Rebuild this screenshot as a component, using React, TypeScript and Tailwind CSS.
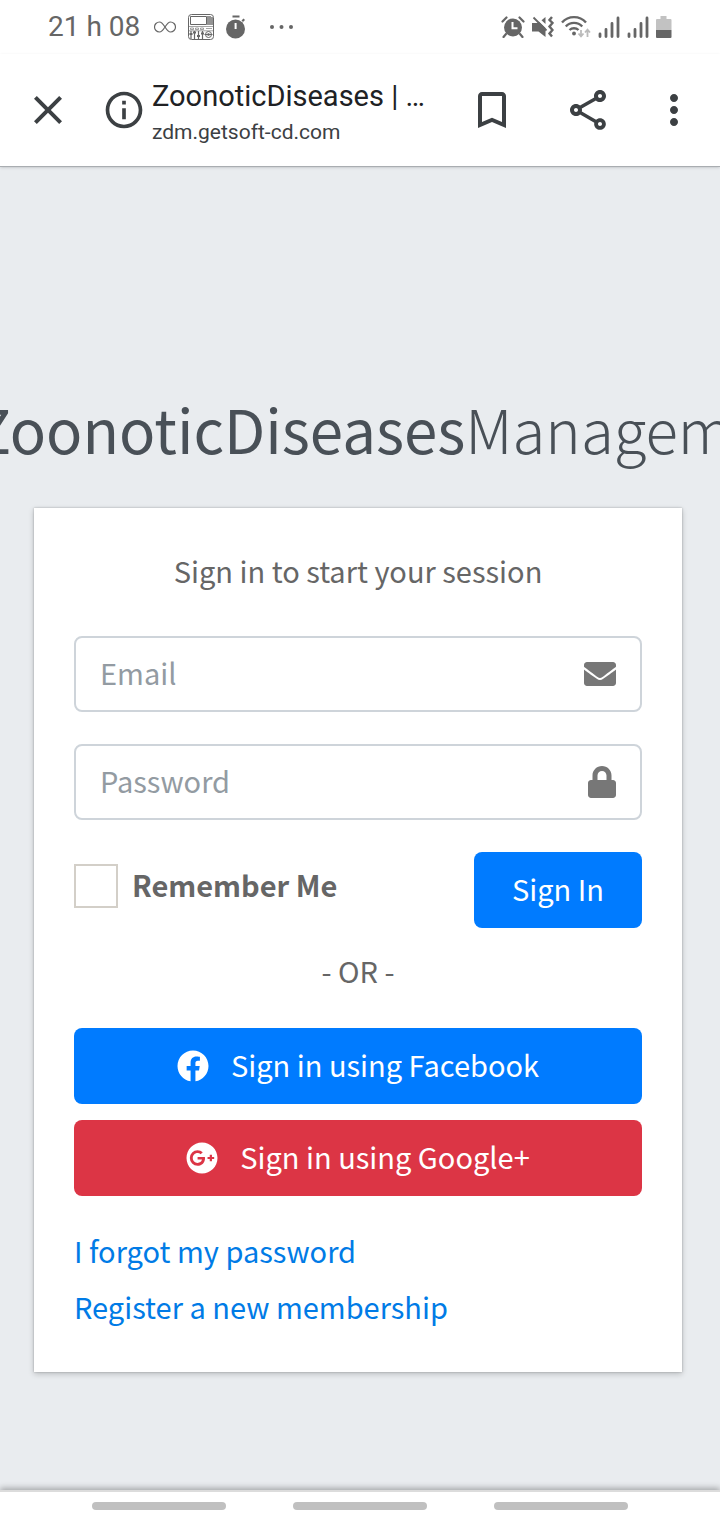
import { FaEnvelope, FaFacebook, FaGooglePlus, FaLock } from "react-icons/fa"
import { MdBookmarkBorder, MdClose, MdInfoOutline, MdMoreVert, MdOutlineShare } from "react-icons/md"

function InfinityIcon() {
  return (
    <svg width="22" height="12" viewBox="0 0 22 12" fill="none" stroke="#666" strokeWidth="1.2">
      <path d="M11 6C9 2.8 7.600 1 5.500 1a5 5 0 0 0 0 10C7.600 11 9 9.200 11 6s3.400-5 5.500-5a5 5 0 0 1 0 10C14.400 11 13 9.200 11 6Z" />
    </svg>
  )
}

function MixerIcon() {
  return (
    <svg width="26" height="26" viewBox="0 0 26 26" fill="none" stroke="#666" strokeWidth="1">
      <rect x="0.5" y="0.5" width="25" height="25" rx="3" />
      <path d="M2.500 2.500h16v8h-16z" />
      <path d="M20 2v9M22 2v9M24 3v8" strokeWidth="1.400" />
      <path d="M0 12.500h26M2.500 14h3v1.500h-3zM7.500 14h3v1.500h-3zM12.500 14h3v1.500h-3zM18 14.500h6M0 16.800h26" strokeWidth="0.600" />
      <path d="M3 17v8M6.500 17v8M10.500 17v8M14.500 17v8" strokeWidth="1.200" />
      <path d="M1.500 20h3M5 18.500h3M9 22h3M13 19.500h3" strokeWidth="2" />
      <circle cx="20.500" cy="20.500" r="3" />
      <circle cx="20.500" cy="20.500" r="1" />
      <path d="M16.500 20.500h8" />
    </svg>
  )
}

function StopwatchIcon() {
  return (
    <svg width="20" height="24" viewBox="0 0 20 24" fill="#666">
      <rect x="6.500" y="0.500" width="7" height="2" />
      <circle cx="9.500" cy="14" r="9.500" />
      <path d="m15.500 5.500 2-2 1.500 1.500-2 2z" />
      <path d="M8.600 8h2v6h-2z" fill="#fff" />
    </svg>
  )
}

function AlarmIcon() {
  return (
    <svg width="24" height="22" viewBox="0 0 24 22" fill="#666">
      <circle cx="12" cy="11.500" r="9" />
      <path d="m1.500 5.500 4-4M22.500 5.500l-4-4M5 18l-2.500 3M19 18l2.500 3" stroke="#666" strokeWidth="2.200" strokeLinecap="round" />
      <path d="M11.500 6v6.200h5" fill="none" stroke="#fff" strokeWidth="2" />
    </svg>
  )
}

function MuteIcon() {
  return (
    <svg width="22" height="22" viewBox="0 0 22 22" fill="#666">
      <path d="M0 7h5l2-1.200L13.500 12v9L6.500 15.500H0z" />
      <path d="M9.500 4.200 13.500 1v7z" />
      <path d="m1.500 1.500 13 13" stroke="#666" strokeWidth="1.800" />
      <path d="m20 1-2.500 3 3 3-3 3.500 3 3.500-3 3.500 2.500 3" fill="none" stroke="#666" strokeWidth="2.400" />
    </svg>
  )
}

function WifiIcon() {
  return (
    <svg width="30" height="24" viewBox="0 0 30 24" fill="none" stroke="#666" strokeWidth="2.400">
      <path d="M1 7.500a16 16 0 0 1 24 0" />
      <path d="M4.800 11.500a11 11 0 0 1 16.400 0" />
      <path d="M8.500 15a6.500 6.500 0 0 1 9 0" />
      <circle cx="13" cy="18.500" r="1.900" fill="#666" stroke="none" />
      <path d="M20 15v6m-2.500-2.500L20 21.300l2.500-2.800M26.500 22v-7M24 17.500l2.500-2.800 2.500 2.800" stroke="#bbb" strokeWidth="1.800" />
    </svg>
  )
}

function SignalIcon() {
  return (
    <svg width="22" height="22" viewBox="0 0 22 22" stroke="#666" strokeWidth="2.800" strokeLinecap="round">
      <path d="M2 18v2.500M8 13.500v7M14 7.500v13M20 2v18.500" />
    </svg>
  )
}

function BatteryIcon() {
  return (
    <svg width="16" height="22" viewBox="0 0 16 22">
      <path d="M4.500 0h6v3H14.500a1 1 0 0 1 1 1v10H0V4a1 1 0 0 1 1-1h3.500z" fill="#c2c2c2" />
      <path d="M0 14h15.500v7a1 1 0 0 1-1 1H1a1 1 0 0 1-1-1z" fill="#666" />
    </svg>
  )
}

function StatusBar() {
  return (
    <div className="flex h-[54px] items-center justify-between pr-12 pl-12 text-[#666]">
      <div className="flex items-center">
        <span className="text-[28px] leading-8">21 h 08</span>
        <div className="ml-3.5 flex items-center gap-3">
          <InfinityIcon />
          <MixerIcon />
          <StopwatchIcon />
        </div>
        <svg className="ml-6" width="24" height="4" viewBox="0 0 24 4" fill="#666">
          <circle cx="2" cy="2" r="2" />
          <circle cx="11.500" cy="2" r="2" />
          <circle cx="21" cy="2" r="2" />
        </svg>
      </div>
      <div className="flex items-center gap-[7px]">
        <AlarmIcon />
        <MuteIcon />
        <WifiIcon />
        <SignalIcon />
        <SignalIcon />
        <BatteryIcon />
      </div>
    </div>
  )
}

function Toolbar() {
  return (
    <header className="z-10 flex h-[113px] items-center border-b border-[#a9adb1] pr-[22px] pl-6 text-[#3c4043] shadow-sm">
      <button type="button" aria-label="Close">
        <MdClose size={48} />
      </button>
      <button type="button" aria-label="Site information" className="ml-[30px]">
        <MdInfoOutline size={44} />
      </button>
      <div className="ml-1.5 min-w-0 flex-1 pt-2">
        <div className="text-[29px] leading-9 whitespace-nowrap text-[#202124]">ZoonoticDiseases | …</div>
        <div className="text-[21px] leading-9">zdm.getsoft-cd.com</div>
      </div>
      <div className="flex items-center">
        <button type="button" aria-label="Bookmark" className="mr-12">
          <MdBookmarkBorder size={48} />
        </button>
        <button type="button" aria-label="Share" className="mr-[38px]">
          <MdOutlineShare size={48} />
        </button>
        <button type="button" aria-label="More">
          <MdMoreVert size={48} />
        </button>
      </div>
    </header>
  )
}

function LoginCard() {
  return (
    <div className="bg-white p-10 text-[29px] leading-[44px] text-[#666] shadow-[0_2px_6px_rgba(0,0,0,0.2),0_0_2px_rgba(0,0,0,0.25)]">
      <p className="mb-10 pb-1 text-center">Sign in to start your session</p>
      <form onSubmit={(e) => e.preventDefault()}>
        <label className="mb-8 flex h-19 items-center rounded-lg border-2 border-[#ced4da] px-6 text-[#777]">
          <input
            type="email"
            aria-label="Email"
            placeholder="Email"
            className="min-w-0 flex-1 pb-1 outline-none placeholder:text-[#939ba2]"
          />
          <FaEnvelope size={32} />
        </label>
        <label className="mb-8 flex h-19 items-center rounded-lg border-2 border-[#ced4da] px-6 text-[#777]">
          <input
            type="password"
            aria-label="Password"
            placeholder="Password"
            className="min-w-0 flex-1 pb-1 outline-none placeholder:text-[#939ba2]"
          />
          <FaLock size={32} className="w-7" />
        </label>
        <div className="flex items-start justify-between">
          <div className="flex items-center pt-3">
            <input
              type="checkbox"
              id="remember"
              className="size-11 appearance-none border-2 border-[#d3cfc8] checked:bg-[#007bff]"
            />
            <label htmlFor="remember" className="-my-1 pb-1 pl-3.5 font-bold">
              Remember Me
            </label>
          </div>
          <button type="submit" className="h-19 rounded-lg bg-[#007bff] px-[38px] pb-1 text-white">
            Sign In
          </button>
        </div>
      </form>
      <p className="mt-5 mb-8 pb-1 text-center">- OR -</p>
      <div className="flex flex-col gap-4 text-white">
        <a href="#facebook" className="flex h-19 items-center justify-center gap-[22px] rounded-lg bg-[#007bff]">
          <FaFacebook size={32} />
          <span className="pb-1">Sign in using Facebook</span>
        </a>
        <a href="#google" className="flex h-19 items-center justify-center gap-[22px] rounded-lg bg-[#dc3545]">
          <FaGooglePlus size={32} />
          <span className="pb-1">Sign in using Google+</span>
        </a>
      </div>
      <div className="mt-8 flex flex-col items-start gap-2 text-[#007be6]">
        <a href="#forgot" className="pb-1">
          I forgot my password
        </a>
        <a href="#register" className="pb-1">
          Register a new membership
        </a>
      </div>
    </div>
  )
}

export default function App() {
  return (
    <div className="flex min-h-screen flex-col overflow-x-hidden bg-white font-[Roboto,sans-serif]">
      <StatusBar />
      <Toolbar />
      <main className="flex-1 bg-[#e9ecef] pt-[217px] pr-[38px] pb-16 pl-[34px] font-['Noto_Sans_CJK_SC',sans-serif]">
        <h1 className="mb-9 flex justify-center pl-20 text-[60px] leading-[88px] whitespace-nowrap text-[#495057]">
          <a href="#home">
            <b className="font-normal">ZoonoticDiseases</b>
            <span className="font-light">Management</span>
          </a>
        </h1>
        <LoginCard />
      </main>
      <nav className="z-10 flex h-[30px] items-center justify-around border-t-2 border-[#dcdcdc] px-[58px] shadow-[0_-2px_6px_rgba(0,0,0,0.3)]">
        <button type="button" aria-label="Recents" className="h-2 w-[134px] rounded-full bg-[#c0c0c0]" />
        <button type="button" aria-label="Home" className="h-2 w-[134px] rounded-full bg-[#c0c0c0]" />
        <button type="button" aria-label="Back" className="h-2 w-[134px] rounded-full bg-[#c0c0c0]" />
      </nav>
    </div>
  )
}
